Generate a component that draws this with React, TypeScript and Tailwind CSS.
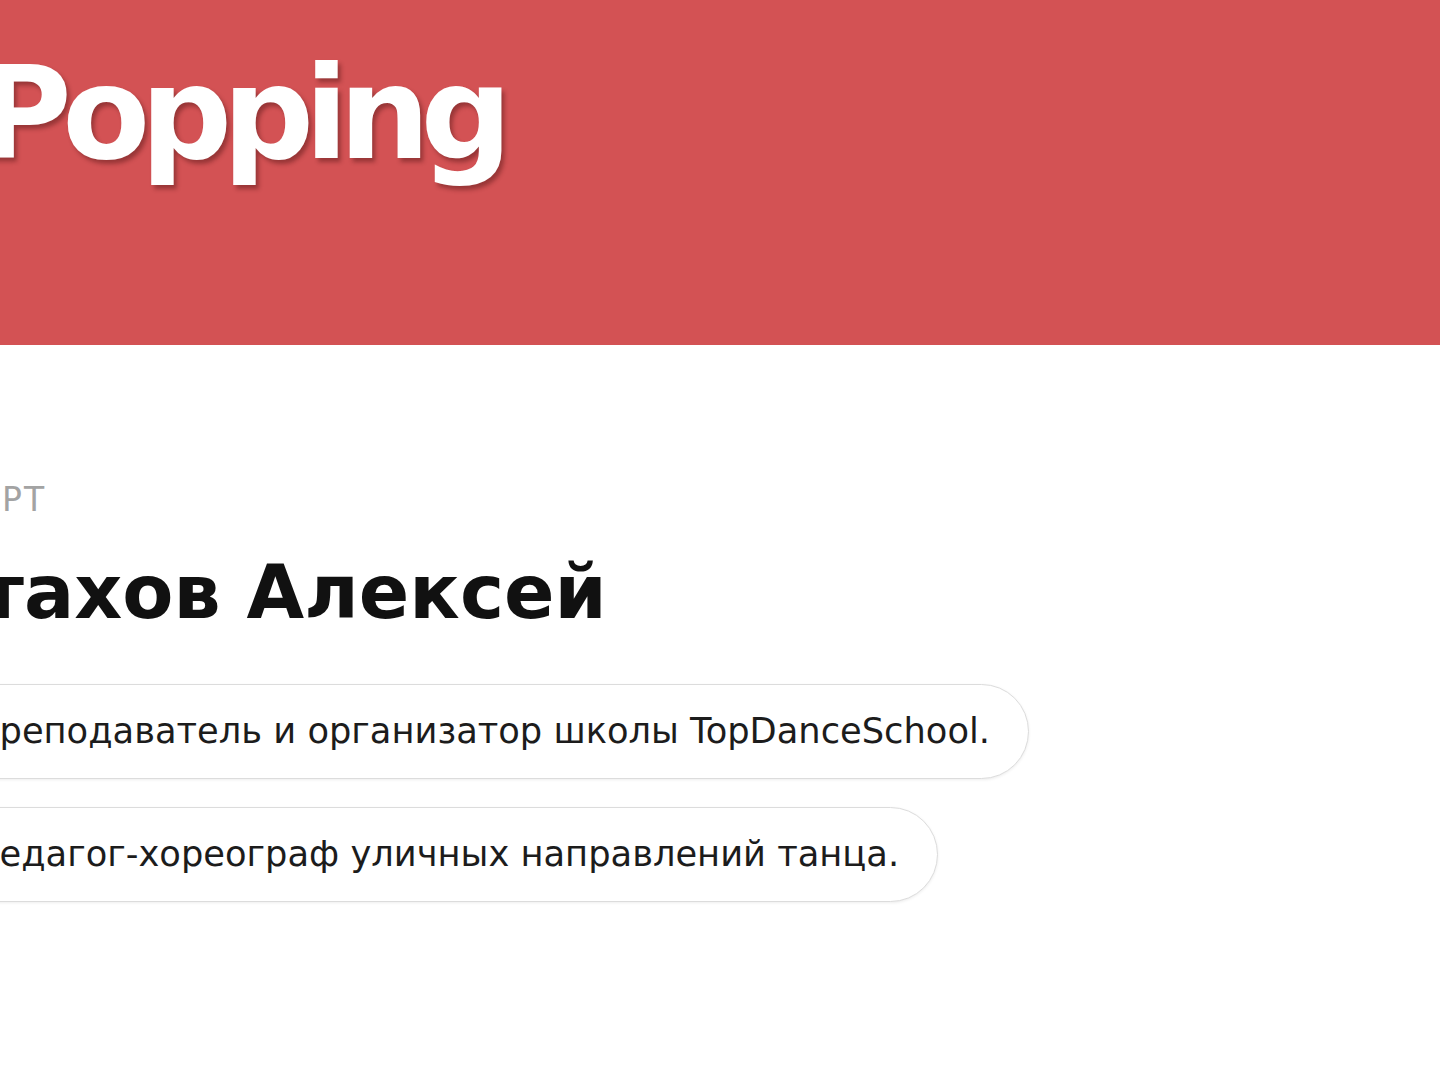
import React from 'react';

const pills = [
  'Преподаватель и организатор школы TopDanceSchool.',
  'Педагог-хореограф уличных направлений танца.',
];

const App: React.FC = () => {
  return (
    <div className="w-[1440px] h-[1080px] overflow-hidden bg-white font-['DejaVu_Sans',sans-serif]">
      {/* шапка */}
      <div className="h-[345px] bg-[#d35254] pt-[50px]">
        <h1 className="-ml-[22px] text-[128px] leading-none font-bold tracking-[-0.075em] text-white whitespace-nowrap [text-shadow:3px_4px_4px_rgba(80,20,20,0.45)]">
          Popping
        </h1>
      </div>

      {/* эксперт */}
      <div className="pt-[138px] flex flex-col items-start">
        <p className="-ml-[123px] text-[33px] leading-none tracking-[0.06em] text-[#a3a3a3] whitespace-nowrap">
          ЭКСПЕРТ
        </p>
        <h2 className="-ml-[121px] mt-[40px] text-[74.5px] leading-none font-bold text-[#111] whitespace-nowrap">
          Астахов Алексей
        </h2>
        <div className="-ml-[62px] mt-[53px] flex flex-col items-start gap-[28px]">
          {pills.map((text) => (
            <div
              key={text}
              className="h-[95px] flex items-center pl-[34px] pr-[38px] rounded-full border border-[#dcdcdc] bg-white shadow-[0_1px_3px_rgba(0,0,0,0.07)] text-[35.25px] text-[#1c1c1c] whitespace-nowrap"
            >
              {text}
            </div>
          ))}
        </div>
      </div>
    </div>
  );
};

export default App;
